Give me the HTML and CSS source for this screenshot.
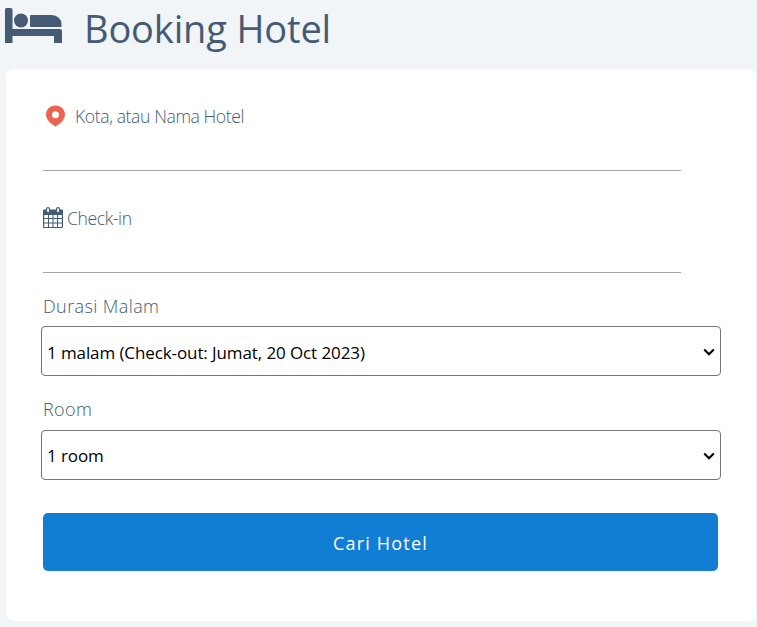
FILE: index.html
```html
<!DOCTYPE html>
<html lang="id">
<head>
<meta charset="utf-8">
<title>Booking Hotel</title>
<link rel="stylesheet" href="styles.css">
</head>
<body>
<header class="header">
  <svg class="bed" viewBox="0 0 57 36" aria-hidden="true">
    <path d="M1.500 0H5.500Q7.500 0 7.500 2V21H55Q57 21 57 23V35H49V28H7.500V35H0V1.500Q0 0 1.500 0Z"/>
    <circle cx="16" cy="12.500" r="7"/>
    <path d="M26 7H46Q54.500 7 56.500 15V19H26Q25 19 25 18V8Q25 7 26 7Z"/>
  </svg>
  <h1 class="title">Booking Hotel</h1>
</header>
<form class="card">
  <div class="field">
    <label class="field-label" for="city">
      <svg class="pin" viewBox="0 0 20 22" aria-hidden="true">
        <path fill-rule="evenodd" d="M9.500 0.500C14.800 0.500 19 4.400 19 9.500C19 14.300 14.800 18.500 9.500 21.500C4.200 18.500 0 14.300 0 9.500C0 4.400 4.200 0.500 9.500 0.500ZM9.500 6.200A3.500 3.500 0 1 0 9.500 13.200A3.500 3.500 0 1 0 9.500 6.200Z"/>
      </svg>
      <span class="city-text">Kota, atau Nama Hotel</span>
    </label>
    <input class="line-input" id="city" type="text">
  </div>
  <div class="field field-date">
    <label class="field-label" for="checkin">
      <svg class="calendar" viewBox="0 0 20 22" aria-hidden="true">
        <path class="calendar-body" d="M1 2.500H19Q20 2.500 20 3.500V20Q20 21 19 21H1Q0 21 0 20V3.500Q0 2.500 1 2.500Z"/>
        <path class="calendar-cells" d="M1.200 8H5V11H1.200ZM6 8H9.500V11H6ZM10.500 8H14V11H10.500ZM15 8H18.800V11H15ZM1.200 12H5V15.500H1.200ZM6 12H9.500V15.500H6ZM10.500 12H14V15.500H10.500ZM15 12H18.800V15.500H15ZM1.200 16.500H5V20H1.200ZM6 16.500H9.500V20H6ZM10.500 16.500H14V20H10.500ZM15 16.500H18.800V20H15Z"/>
        <rect class="calendar-ring" x="3.500" y="0.700" width="3" height="5" rx="1.500"/>
        <rect class="calendar-ring" x="13.500" y="0.700" width="3" height="5" rx="1.500"/>
      </svg>
      <span class="date-text">Check-in</span>
    </label>
    <input class="line-input" id="checkin" type="text">
  </div>
  <label class="select-label duration-label" for="duration">Durasi Malam</label>
  <div class="select-box">
    <select class="select duration-select" id="duration"><option>1 malam (Check-out: Jumat, 20 Oct 2023)</option></select>
    <svg class="chevron" viewBox="0 0 12 8" aria-hidden="true"><path d="M1.200 1.400L6 6.200L10.800 1.400"/></svg>
  </div>
  <label class="select-label room-label" for="room">Room</label>
  <div class="select-box">
    <select class="select room-select" id="room"><option>1 room</option></select>
    <svg class="chevron" viewBox="0 0 12 8" aria-hidden="true"><path d="M1.200 1.400L6 6.200L10.800 1.400"/></svg>
  </div>
  <button class="submit" type="button">Cari Hotel</button>
</form>
</body>
</html>
```
FILE: styles.css
```css
* {
  box-sizing: border-box;
}

body {
  margin: 0;
  height: 627px;
  overflow: hidden;
  background: #f1f5f8;
  color: #455b73;
  font-family: "Open Sans", "Noto Sans", sans-serif;
}

.header {
  display: flex;
  height: 69px;
  padding: 8px 0 0 5px;
}

.bed {
  width: 57px;
  height: 36px;
  fill: #455b73;
}

.title {
  margin: -6px 0 0 22px;
  font-size: 38px;
  line-height: 52px;
  font-weight: 400;
  letter-spacing: -0.15px;
  white-space: nowrap;
}

.card {
  width: 750px;
  height: 552px;
  margin-left: 6px;
  padding: 35px 35px 0;
  border-radius: 8px;
  background: #fff;
}

.field {
  display: flex;
  flex-direction: column;
  width: 638px;
  height: 67px;
  margin-left: 2px;
}

.field-date {
  margin-top: 35px;
}

.field-label {
  display: flex;
  align-items: center;
  height: 24px;
  font-size: 17.6px;
  font-weight: 300;
  letter-spacing: -0.4px;
  white-space: nowrap;
}

.pin {
  width: 20px;
  height: 22px;
  margin-left: 3px;
  fill: #ed6352;
}

.city-text {
  margin-left: 9px;
}

.calendar {
  width: 20px;
  height: 22px;
}

.calendar-body {
  fill: #455b73;
}

.calendar-cells {
  fill: #fff;
}

.calendar-ring {
  fill: #fff;
  stroke: #455b73;
  stroke-width: 1.2;
}

.date-text {
  margin-left: 4px;
}

.line-input {
  width: 100%;
  height: 43px;
  padding: 0;
  border: 0;
  border-bottom: 1px solid #a6a6a6;
  outline: 0;
  background: transparent;
}

.select-label {
  display: block;
  height: 24px;
  font-size: 18px;
  line-height: 24px;
  font-weight: 300;
  letter-spacing: 0.4px;
}

.duration-label {
  margin: 21px 0 8px 2px;
}

.room-label {
  margin: 21px 0 9px 2px;
}

.select-box {
  position: relative;
  width: 680px;
  height: 50px;
}

.select {
  display: block;
  appearance: none;
  width: 100%;
  height: 100%;
  padding: 2px 5px 0;
  border: 1px solid #767676;
  border-radius: 4px;
  background-color: #fff;
  color: #000;
  font-family: "Open Sans", "Noto Sans", sans-serif;
  font-size: 17px;
  letter-spacing: -0.1px;
}

.room-select {
  padding-top: 0;
}

.chevron {
  position: absolute;
  top: 22px;
  right: 6px;
  width: 12px;
  height: 8px;
  fill: none;
  stroke: #000;
  stroke-width: 2.1;
  pointer-events: none;
}

.submit {
  display: block;
  width: 675px;
  height: 58px;
  margin: 33px 0 0 2px;
  padding: 2px 0 0;
  border: 0;
  border-radius: 5px;
  background: #117ed3;
  color: #fff;
  font-family: "Open Sans", "Noto Sans", sans-serif;
  font-size: 18px;
  letter-spacing: 1.2px;
}
```
